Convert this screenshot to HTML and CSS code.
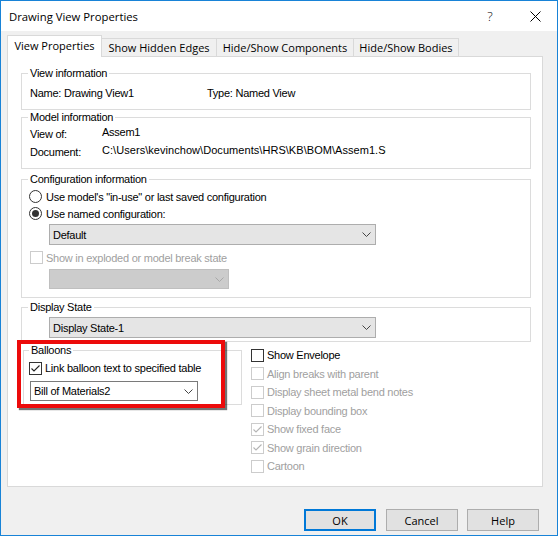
FILE: index.html
```html
<!DOCTYPE html>
<html>
<head>
<meta charset="utf-8">
<link rel="stylesheet" href="styles.css">
</head>
<body>
<div class="window">
  <div class="titlebar">
    <span class="title">Drawing View Properties</span>
    <span class="tbtn help">?</span>
    <span class="tbtn close"><svg width="11" height="11" viewBox="0 0 11 11"><path d="M0.5 0.5 L10.5 10.5 M10.5 0.5 L0.5 10.5" stroke="#000" stroke-width="1" fill="none"/></svg></span>
  </div>
  <div class="body">
    <div class="tabs">
      <div class="tab active">View Properties</div>
      <div class="tab t2">Show Hidden Edges</div>
      <div class="tab t3">Hide/Show Components</div>
      <div class="tab t4">Hide/Show Bodies</div>
    </div>
    <div class="panel">
      <fieldset class="group g-view">
        <legend>View information</legend>
        <div class="inforow"><span class="col1">Name: Drawing View1</span><span>Type: Named View</span></div>
      </fieldset>

      <fieldset class="group g-model">
        <legend>Model information</legend>
        <div class="kv"><span class="k">View of:</span><span class="v">Assem1</span></div>
        <div class="kv"><span class="k">Document:</span><span class="v path">C:\Users\kevinchow\Documents\HRS\KB\BOM\Assem1.SLDASM</span></div>
      </fieldset>

      <fieldset class="group g-config">
        <legend>Configuration information</legend>
        <div class="optrow"><span class="radio"></span><span>Use model's "in-use" or last saved configuration</span></div>
        <div class="optrow"><span class="radio on"></span><span>Use named configuration:</span></div>
        <div class="combo wide"><span>Default</span><svg width="9" height="5" viewBox="0 0 9 5"><path d="M0.5 0.5 L4.5 4.5 L8.5 0.5" stroke="#444" fill="none"/></svg></div>
        <div class="optrow chkrow disabled"><span class="check"></span><span>Show in exploded or model break state</span></div>
        <div class="combo small off"><svg width="9" height="5" viewBox="0 0 9 5"><path d="M0.5 0.5 L4.5 4.5 L8.5 0.5" stroke="#a8a8a8" fill="none"/></svg></div>
      </fieldset>

      <fieldset class="group g-display">
        <legend>Display State</legend>
        <div class="combo wide"><span>Display State-1</span><svg width="9" height="5" viewBox="0 0 9 5"><path d="M0.5 0.5 L4.5 4.5 L8.5 0.5" stroke="#444" fill="none"/></svg></div>
      </fieldset>

      <div class="lower">
        <fieldset class="group g-balloons">
          <legend>Balloons</legend>
          <div class="optrow bchk"><span class="check"><svg width="11" height="11" viewBox="0 0 11 11"><path d="M1.5 5.5 L4 8 L9.5 2.5" stroke="#222" stroke-width="1.1" fill="none"/></svg></span><span>Link balloon text to specified table</span></div>
          <div class="combo white"><span>Bill of Materials2</span><svg width="9" height="5" viewBox="0 0 9 5"><path d="M0.5 0.5 L4.5 4.5 L8.5 0.5" stroke="#444" fill="none"/></svg></div>
        </fieldset>
        <div class="opts">
          <div class="opt"><span class="check"></span><span>Show Envelope</span></div>
          <div class="opt disabled"><span class="check"></span><span>Align breaks with parent</span></div>
          <div class="opt disabled"><span class="check"></span><span>Display sheet metal bend notes</span></div>
          <div class="opt disabled"><span class="check"></span><span>Display bounding box</span></div>
          <div class="opt disabled"><span class="check"><svg width="11" height="11" viewBox="0 0 11 11"><path d="M1.5 5.5 L4 8 L9.5 2.5" stroke="#b4b4b4" stroke-width="1.1" fill="none"/></svg></span><span>Show fixed face</span></div>
          <div class="opt disabled"><span class="check"><svg width="11" height="11" viewBox="0 0 11 11"><path d="M1.5 5.5 L4 8 L9.5 2.5" stroke="#b4b4b4" stroke-width="1.1" fill="none"/></svg></span><span>Show grain direction</span></div>
          <div class="opt disabled"><span class="check"></span><span>Cartoon</span></div>
        </div>
        <div class="highlight"></div>
      </div>
    </div>
    <div class="buttons">
      <button class="btn default">OK</button>
      <button class="btn">Cancel</button>
      <button class="btn">Help</button>
    </div>
  </div>
</div>
</body>
</html>
```
FILE: styles.css
```css
body {
  margin: 0;
  background: #ffffff;
}

.window {
  width: 558px;
  height: 536px;
  box-sizing: border-box;
  border: 1px solid #1883d7;
  background: #f0f0f0;
  display: flex;
  flex-direction: column;
  font-family: "Liberation Sans", Arial, sans-serif;
  font-size: 11px;
  color: #000;
  letter-spacing: -0.25px;
}

.titlebar {
  height: 30px;
  flex: none;
  background: #fff;
  display: flex;
  align-items: center;
  font-family: "Open Sans", sans-serif;
  font-size: 11.3px;
  letter-spacing: 0;
}

.title {
  flex: 1;
  padding-left: 8px;
}

.tbtn {
  height: 30px;
  display: flex;
  align-items: center;
  justify-content: center;
}

.help {
  width: 46px;
  font-size: 13px;
  font-weight: 300;
}

.close {
  width: 44px;
}

.body {
  flex: 1;
  display: flex;
  flex-direction: column;
  padding: 4px 0 0 6px;
}

.tabs {
  display: flex;
  align-items: flex-end;
  height: 21px;
  font-family: "Open Sans", sans-serif;
  font-size: 11px;
  letter-spacing: 0;
}

.tab {
  box-sizing: border-box;
  height: 18px;
  border-top: 1px solid #d9d9d9;
  border-right: 1px solid #d9d9d9;
  background: #f0f0f0;
  text-align: center;
  line-height: 17px;
  white-space: nowrap;
}

.tab.active {
  width: 95px;
  height: 22px;
  margin-bottom: -1px;
  border-left: 1px solid #d9d9d9;
  background: #fff;
  line-height: 20px;
  position: relative;
  z-index: 1;
}

.t2 { width: 115px; }
.t3 { width: 137px; }
.t4 { width: 105px; }

.panel {
  box-sizing: border-box;
  width: 536px;
  height: 431px;
  flex: none;
  border: 1px solid #d9d9d9;
  background: #fff;
  padding: 10px 11px 0 13px;
}

.group {
  margin: 0;
  border: 1px solid #dcdcdc;
  min-width: 0;
  padding: 0 8px;
}

.group legend {
  padding: 0 2px;
  margin-left: -2px;
  line-height: 13px;
}

.group.g-view {
  padding-top: 7px;
  padding-bottom: 9px;
}

.inforow {
  display: flex;
  line-height: 13px;
}

.inforow .col1 {
  width: 177px;
}

.group.g-model {
  margin-top: 1px;
  padding-bottom: 8px;
}

.kv {
  display: flex;
  height: 18px;
  align-items: center;
}

.kv .k {
  width: 72px;
  padding-top: 2px;
}

.kv .v {
  padding-bottom: 2px;
}

.kv .path {
  width: 284px;
  overflow: hidden;
  white-space: nowrap;
  letter-spacing: 0.05px;
}

.group.g-config {
  margin-top: 4px;
  padding-top: 2px;
  padding-bottom: 8px;
}

.optrow {
  display: flex;
  align-items: center;
  height: 17px;
  white-space: nowrap;
}

.radio {
  box-sizing: border-box;
  width: 13px;
  height: 13px;
  border: 1px solid #333;
  border-radius: 50%;
  background: #fff;
  margin-left: -1px;
  margin-right: 4px;
  display: flex;
  align-items: center;
  justify-content: center;
}

.radio.on::after {
  content: "";
  width: 7px;
  height: 7px;
  border-radius: 50%;
  background: #333;
}

.check {
  box-sizing: border-box;
  width: 13px;
  height: 13px;
  flex: none;
  border: 1px solid #333;
  background: #fff;
  margin-right: 3px;
  display: flex;
  align-items: center;
  justify-content: center;
}

.disabled {
  color: #a0a0a0;
}

.disabled .check {
  border-color: #cccccc;
}

.combo {
  box-sizing: border-box;
  display: flex;
  align-items: center;
  justify-content: space-between;
  border: 1px solid #adadad;
  background: #e5e5e5;
  padding: 0 4px 0 3px;
}

.combo svg {
  flex: none;
}

.combo.wide {
  width: 327px;
  height: 21px;
  margin-left: 19px;
  margin-top: 2px;
}

.optrow.chkrow {
  margin-top: 4px;
}

.combo.small {
  width: 180px;
  height: 20px;
  margin-left: 19px;
  margin-top: 3px;
  justify-content: flex-end;
}

.combo.off {
  background: #cccccc;
  border-color: #bfbfbf;
}

.group.g-display {
  margin-top: 3px;
  padding-bottom: 3px;
}

.g-display .combo.wide {
  margin-top: 3px;
}

.lower {
  display: flex;
  align-items: flex-start;
  position: relative;
}

.group.g-balloons {
  width: 219px;
  box-sizing: border-box;
  margin-top: 2px;
  margin-left: 2px;
  padding: 2px 6px 3px 7px;
}

.optrow.bchk {
  height: 18px;
  margin-left: -2px;
}

.combo.white {
  width: 168px;
  height: 20px;
  margin-top: 4px;
  margin-left: -1px;
  background: #fff;
  border-color: #7a7a7a;
}

.opts {
  margin-left: 9px;
  padding-top: 4px;
}

.opt {
  display: flex;
  align-items: center;
  height: 18.5px;
  white-space: nowrap;
}

.highlight {
  position: absolute;
  left: -4px;
  top: -2px;
  width: 208px;
  height: 68px;
  box-sizing: border-box;
  border: 4px solid #ec0b0b;
  box-shadow: 2px 2px 1px rgba(0, 0, 0, 0.55);
  pointer-events: none;
}

.buttons {
  display: flex;
  justify-content: flex-end;
  gap: 9.5px;
  margin-top: 22px;
  padding-right: 18px;
}

.btn {
  box-sizing: border-box;
  width: 72px;
  height: 22px;
  margin: 0;
  padding: 0;
  border: 1px solid #adadad;
  background: #e1e1e1;
  font-family: "Open Sans", sans-serif;
  font-size: 11px;
  color: #000;
}

.btn.default {
  border: 2px solid #0078d7;
}
```
